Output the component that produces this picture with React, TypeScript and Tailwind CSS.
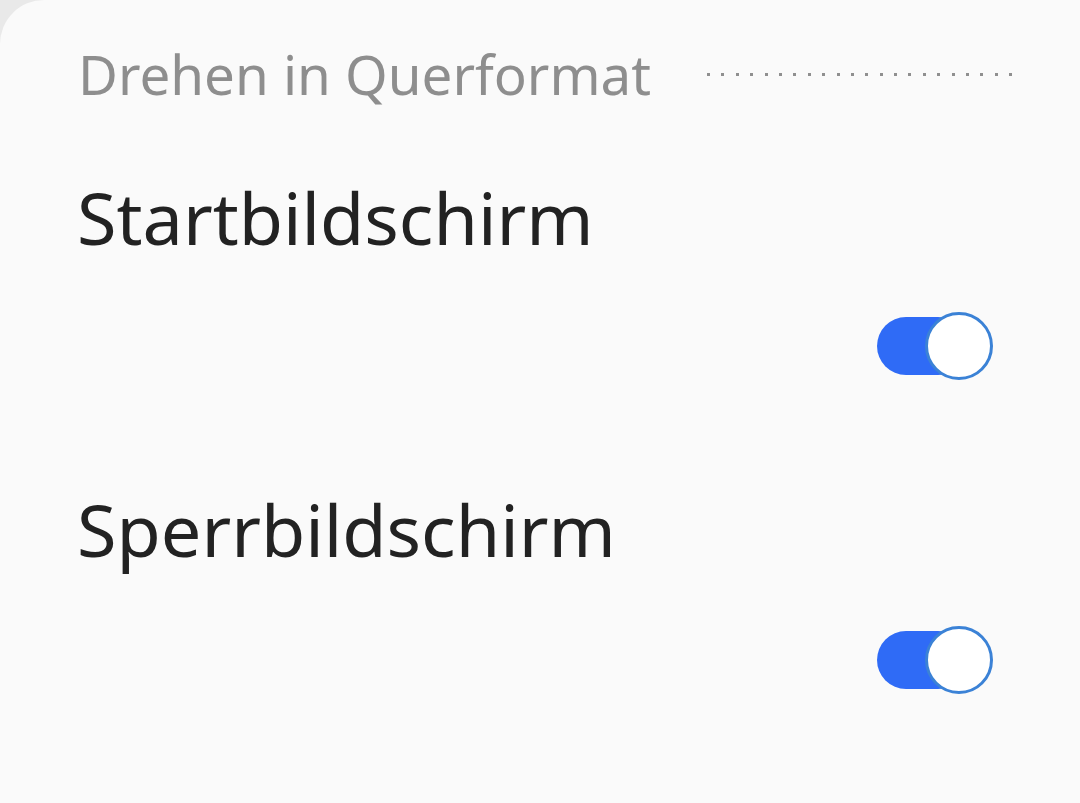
import React from "react";

function Toggle() {
  return (
    <div className="relative w-[116px] h-[68px]">
      <div className="absolute left-0 top-[5px] w-[90px] h-[58px] rounded-full bg-[#2f6bf6]" />
      <div className="absolute left-[48px] top-0 w-[68px] h-[68px] rounded-full bg-white border-[3px] border-[#3b82d6]" />
    </div>
  );
}

export default function App() {
  const font = { fontFamily: '"Noto Sans", "Open Sans", sans-serif' };
  return (
    <div className="w-[1080px] h-[803px] bg-[#e9e9e9] overflow-hidden" style={font}>
      <div className="w-full h-full bg-[#fafafa] rounded-tl-[44px]">
        <div className="flex items-center pl-[78px] pt-[47px]">
          <span className="text-[54.7px] leading-none text-[#8e8e8e]">Drehen in Querformat</span>
          <div className="ml-[56px] flex gap-[11.4px]">
            {Array.from({ length: 22 }).map((_, i) => (
              <div key={i} className="w-[3px] h-[3px] bg-[#8f8f8f]" />
            ))}
          </div>
        </div>
        <div className="pl-[77px] pt-[79px] text-[72px] leading-none text-[#222222]">Startbildschirm</div>
        <div className="flex justify-end pr-[87px] pt-[59px]">
          <Toggle />
        </div>
        <div className="pl-[77px] pt-[113px] text-[72px] leading-none text-[#222222]">Sperrbildschirm</div>
        <div className="flex justify-end pr-[87px] pt-[61px]">
          <Toggle />
        </div>
      </div>
    </div>
  );
}
